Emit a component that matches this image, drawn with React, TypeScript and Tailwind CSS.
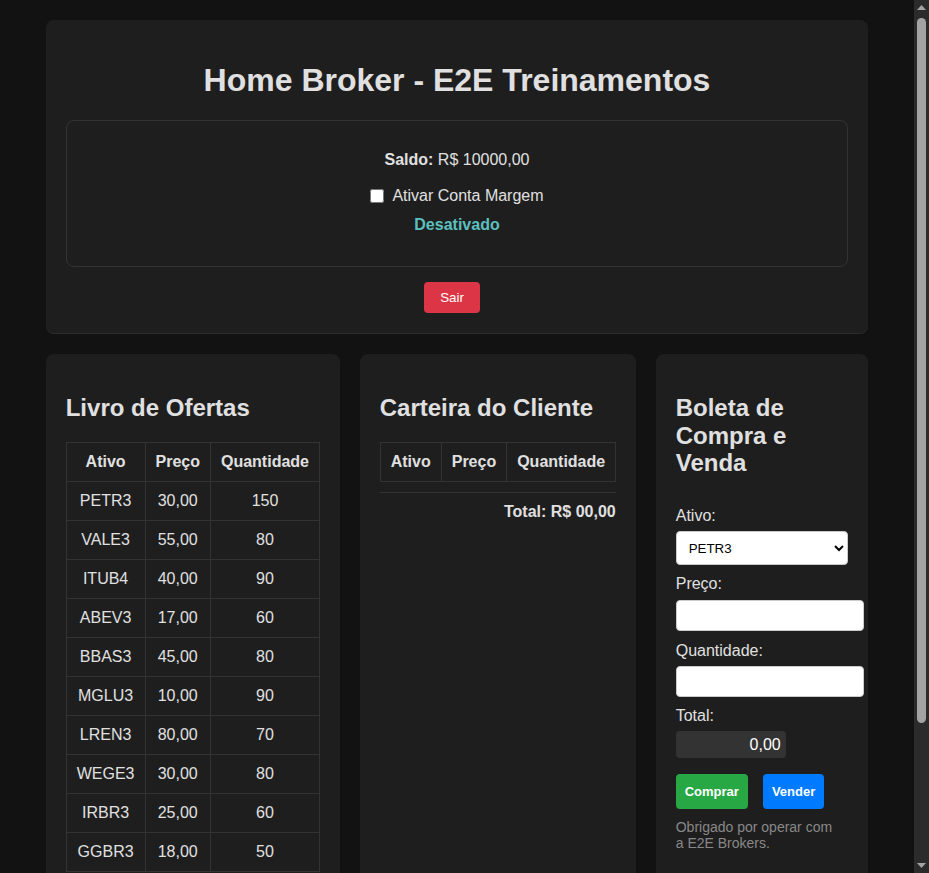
import { useEffect, useState } from "react";

const ofertas = [
  { ativo: "PETR3", preco: "30,00", qtd: 150 },
  { ativo: "VALE3", preco: "55,00", qtd: 80 },
  { ativo: "ITUB4", preco: "40,00", qtd: 90 },
  { ativo: "ABEV3", preco: "17,00", qtd: 60 },
  { ativo: "BBAS3", preco: "45,00", qtd: 80 },
  { ativo: "MGLU3", preco: "10,00", qtd: 90 },
  { ativo: "LREN3", preco: "80,00", qtd: 70 },
  { ativo: "WEGE3", preco: "30,00", qtd: 80 },
  { ativo: "IRBR3", preco: "25,00", qtd: 60 },
  { ativo: "GGBR3", preco: "18,00", qtd: 50 },
];

const cell = "border border-[#333] p-[10px] text-center leading-[18px]";
const field =
  "block box-content w-full h-[15px] p-[7px] bg-white text-black text-[13.33px] border border-[#ccc] rounded";

const TableHead = () => (
  <thead>
    <tr>
      <th className={cell}>Ativo</th>
      <th className={cell}>Preço</th>
      <th className={cell}>Quantidade</th>
    </tr>
  </thead>
);

// the window's scrollbar, as it shows in the screenshot
const ScrollBar = () => (
  <div className="fixed right-0 top-0 w-[15px] h-screen bg-[#2b2b2b]">
    <svg className="absolute left-[3px] top-[5px]" width="9" height="6" viewBox="0 0 9 6">
      <path d="M4.5 0 L9 5 L0 5 Z" fill="#a3a3a3" />
    </svg>
    <div className="absolute left-[3px] top-[18px] w-[9px] h-[705px] rounded-full bg-[#a3a3a3]" />
    <svg className="absolute left-[3px] bottom-[5px]" width="9" height="6" viewBox="0 0 9 6">
      <path d="M0 1 L9 1 L4.5 6 Z" fill="#a3a3a3" />
    </svg>
  </div>
);

const App = () => {
  const [margem, setMargem] = useState(false);

  useEffect(() => {
    document.body.style.background = "#121212";
  }, []);

  return (
    <div className="min-h-screen bg-[#121212] text-[#e0e0e0] font-['Liberation_Sans',Arial,sans-serif]">
      <div className="mr-[15px] pt-5 pb-[158px]">
        <header className="w-[90%] mx-auto bg-[#1e1e1e] rounded-lg p-5 shadow-[0_1px_0_#2c2c2c]">
          <h1 className="text-[32px] leading-[37px] font-bold text-center my-[21.5px]">
            Home Broker - E2E Treinamentos
          </h1>

          <div className="border border-[#333] rounded-lg pt-[30px] pb-[32px] flex flex-col items-center">
            <p className="leading-[18px]">
              <strong>Saldo:</strong> R$ 10000,00
            </p>
            <label className="mt-[17px] h-[19px] flex items-center gap-[8px] leading-[18px]">
              <input
                type="checkbox"
                checked={margem}
                onChange={() => setMargem(!margem)}
                className="w-[14px] h-[14px] m-0"
              />
              Ativar Conta Margem
            </label>
            <p className="mt-[11px] leading-[18px] font-bold text-[#5bc0be]">
              {margem ? "Ativado" : "Desativado"}
            </p>
          </div>

          <div className="flex justify-center mt-[15px]">
            <button className="mr-[10px] bg-[#dc3545] text-white text-[13.33px] leading-[15px] px-4 py-2 rounded">
              Sair
            </button>
          </div>
        </header>

        <main className="w-[90%] mx-auto mt-[21px] flex gap-5 items-stretch">
          <section className="w-[294px] shrink-0 bg-[#1e1e1e] rounded-lg p-5">
            <h2 className="text-2xl leading-[27.6px] font-bold my-5">Livro de Ofertas</h2>
            <table className="border-collapse border border-[#333]">
              <TableHead />
              <tbody>
                {ofertas.map((o) => (
                  <tr key={o.ativo}>
                    <td className={cell}>{o.ativo}</td>
                    <td className={cell}>{o.preco}</td>
                    <td className={cell}>{o.qtd}</td>
                  </tr>
                ))}
              </tbody>
            </table>
          </section>

          <section className="w-[276px] shrink-0 bg-[#1e1e1e] rounded-lg p-5">
            <h2 className="text-2xl leading-[27.6px] font-bold my-5">Carteira do Cliente</h2>
            <table className="border-collapse border border-[#333]">
              <TableHead />
              <tbody></tbody>
            </table>
            <div className="mt-[10px] pt-[10px] border-t border-[#333] text-right font-bold leading-[18px]">
              Total: R$ 00,00
            </div>
          </section>

          <section className="flex-1 min-w-0 bg-[#1e1e1e] rounded-lg p-5">
            <h2 className="text-2xl leading-[27.6px] font-bold my-5">Boleta de Compra e Venda</h2>
            <form onSubmit={(e) => e.preventDefault()} className="flex flex-col items-start">
              <label className="mt-[10px] mb-[6px] leading-[18.4px]">Ativo:</label>
              <select className="w-full h-[34px] px-[8px] bg-white text-black text-[13.33px] border border-[#ccc] rounded">
                {ofertas.map((o) => (
                  <option key={o.ativo}>{o.ativo}</option>
                ))}
              </select>

              <label className="mt-[10px] mb-[6px] leading-[18.4px]">Preço:</label>
              <input type="number" className={field} />

              <label className="mt-[11px] mb-[6px] leading-[18.4px]">Quantidade:</label>
              <input type="number" className={field} />

              <label className="mt-[10px] mb-[6px] leading-[18.4px]">Total:</label>
              <div className="w-[110px] h-[27px] px-[5px] leading-[27px] text-right bg-[#333] text-white rounded">
                0,00
              </div>

              <div className="flex gap-[15px] mt-4">
                <button className="bg-[#28a745] text-white font-bold text-[13px] leading-[15px] py-[10px] px-[9px] rounded">
                  Comprar
                </button>
                <button className="bg-[#007bff] text-white font-bold text-[13px] leading-[15px] py-[10px] px-[9px] rounded">
                  Vender
                </button>
              </div>
            </form>
            <p className="mt-[10px] text-[14px] leading-[16px] text-[#888]">
              Obrigado por operar com
              <br />a E2E Brokers.
            </p>
          </section>
        </main>
      </div>
      <ScrollBar />
    </div>
  );
};

export default App;
